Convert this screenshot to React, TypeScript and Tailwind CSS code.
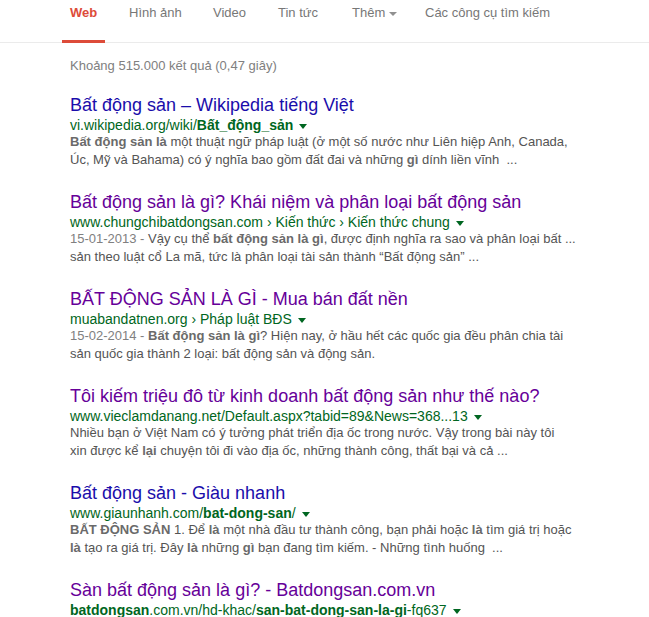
import React from "react";

type Part = string | { b: string };

type Result = {
  title: string;
  visited: boolean;
  url: Part[];
  date?: string;
  lines: Part[][];
};

const results: Result[] = [
  {
    title: "Bất động sản – Wikipedia tiếng Việt",
    visited: false,
    url: ["vi.wikipedia.org/wiki/", { b: "Bất_động_sản" }],
    lines: [
      [{ b: "Bất động sản là" }, " một thuật ngữ pháp luật (ở một số nước như Liên hiệp Anh, Canada,"],
      ["Úc, Mỹ và Bahama) có ý nghĩa bao gồm đất đai và những ", { b: "gì" }, " dính liền vĩnh\u00a0 ..."],
    ],
  },
  {
    title: "Bất động sản là gì? Khái niệm và phân loại bất động sản",
    visited: true,
    url: ["www.chungchibatdongsan.com › Kiến thức › Kiến thức chung"],
    date: "15-01-2013 - ",
    lines: [
      ["Vậy cụ thể ", { b: "bất động sản là gì" }, ", được định nghĩa ra sao và phân loại bất ..."],
      ["sản theo luật cổ La mã, tức là phân loại tài sản thành “Bất động sản” ..."],
    ],
  },
  {
    title: "BẤT ĐỘNG SẢN LÀ GÌ - Mua bán đất nền",
    visited: true,
    url: ["muabandatnen.org › Pháp luật BĐS"],
    date: "15-02-2014 - ",
    lines: [
      [{ b: "Bất động sản là gì" }, "? Hiện nay, ở hầu hết các quốc gia đều phân chia tài"],
      ["sản quốc gia thành 2 loại: bất động sản và động sản."],
    ],
  },
  {
    title: "Tôi kiếm triệu đô từ kinh doanh bất động sản như thế nào?",
    visited: true,
    url: ["www.vieclamdanang.net/Default.aspx?tabid=89&News=368...13"],
    lines: [
      ["Nhiều bạn ở Việt Nam có ý tưởng phát triển địa ốc trong nước. Vậy trong bài này tôi"],
      ["xin được kể ", { b: "lại" }, " chuyện tôi đi vào địa ốc, những thành công, thất bại và cả ..."],
    ],
  },
  {
    title: "Bất động sản - Giàu nhanh",
    visited: false,
    url: ["www.giaunhanh.com/", { b: "bat-dong-san" }, "/"],
    lines: [
      [
        { b: "BẤT ĐỘNG SẢN" },
        " 1. Để ",
        { b: "là" },
        " một nhà đầu tư thành công, bạn phải hoặc ",
        { b: "là" },
        " tìm giá trị hoặc",
      ],
      [
        { b: "là" },
        " tạo ra giá trị. Đây ",
        { b: "là" },
        " những ",
        { b: "gì" },
        " bạn đang tìm kiếm. - Những tình huống\u00a0 ...",
      ],
    ],
  },
  {
    title: "Sàn bất động sản là gì? - Batdongsan.com.vn",
    visited: true,
    url: [{ b: "batdongsan" }, ".com.vn/hd-khac/", { b: "san-bat-dong-san-la-gi" }, "-fq637"],
    lines: [],
  },
];

const tabs = [
  { label: "Web", width: "w-[59px]", active: true },
  { label: "Hình ảnh", width: "w-[84px]" },
  { label: "Video", width: "w-[65px]" },
  { label: "Tin tức", width: "w-[74px]" },
  { label: "Thêm", width: "w-[73px]", caret: true },
  { label: "Các công cụ tìm kiếm", width: "w-auto" },
];

function Parts({ parts, boldClass }: { parts: Part[]; boldClass: string }) {
  return (
    <>
      {parts.map((p, i) =>
        typeof p === "string" ? (
          <span key={i}>{p}</span>
        ) : (
          <b key={i} className={boldClass}>
            {p.b}
          </b>
        )
      )}
    </>
  );
}

export default function App() {
  return (
    <div className="min-h-screen bg-white font-['Liberation_Sans',Arial,sans-serif]">
      {/* Tabs */}
      <div className="flex h-[43px] border-b border-[#ebebeb] pl-[62px]">
        {tabs.map((t) => (
          <div key={t.label} className={`${t.width} shrink-0 h-full`}>
            <div className="relative inline-block h-full px-2 pt-[3px] text-[13px] leading-[17px] whitespace-nowrap">
              <span className={t.active ? "font-bold text-[#dd4b39]" : "text-[#777777]"}>{t.label}</span>
              {t.caret && (
                <span className="ml-[4px] inline-block align-middle border-x-4 border-t-4 border-x-transparent border-t-[#909090]" />
              )}
              {t.active && <div className="absolute bottom-0 left-0 right-0 h-[3px] bg-[#dd4b39]" />}
            </div>
          </div>
        ))}
      </div>

      <div className="pl-[70px]">
        <div className="mt-[14px] text-[13px] leading-[17px] text-[#808080]">Khoảng 515.000 kết quả (0,47 giây)</div>

        <div className="mt-[20px]">
          {results.map((r, i) => (
            <div key={i} className="mb-[22px]">
              <div className={`text-[18px] leading-[22px] whitespace-nowrap ${r.visited ? "text-[#660099]" : "text-[#1a0dab]"}`}>
                {r.title}
              </div>
              <div className="mt-[1px] text-[14px] leading-4 text-[#006621] whitespace-nowrap">
                <Parts parts={r.url} boldClass="font-bold" />
                <span className="ml-[6px] inline-block align-middle border-x-[4px] border-t-[5px] border-x-transparent border-t-[#006621]" />
              </div>
              <div className="text-[13px] leading-[18px] text-[#545454]">
                {r.lines.map((line, j) => (
                  <div key={j} className="whitespace-nowrap">
                    {j === 0 && r.date && <span className="text-[#808080]">{r.date}</span>}
                    <Parts parts={line} boldClass="font-bold text-[#6a6a6a]" />
                  </div>
                ))}
              </div>
            </div>
          ))}
        </div>
      </div>
    </div>
  );
}
